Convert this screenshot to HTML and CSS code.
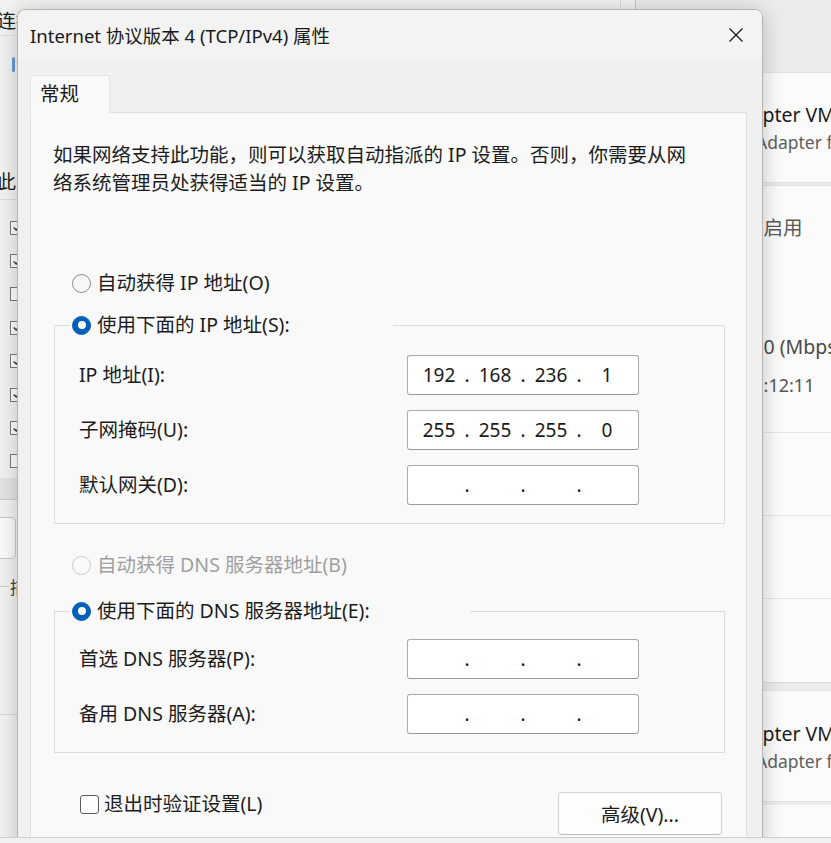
FILE: index.html
```html
<!DOCTYPE html>
<html lang="zh-CN">
<head>
<meta charset="utf-8">
<title>Internet 协议版本 4 (TCP/IPv4) 属性</title>
<link rel="stylesheet" href="styles.css">
</head>
<body>
<div class="desktop">
  <div class="win-left">
    <div class="wl-head">连接</div>
    <div class="wl-tick"></div>
    <div class="wl-label">此</div>
    <ul class="wl-list">
      <li><span class="cb"><svg viewBox="0 0 13 13" width="11" height="11"><polyline points="2,6.5 5,9.5 11,3" fill="none" stroke="#333" stroke-width="1.6"/></svg></span></li>
      <li><span class="cb"><svg viewBox="0 0 13 13" width="11" height="11"><polyline points="2,6.5 5,9.5 11,3" fill="none" stroke="#333" stroke-width="1.6"/></svg></span></li>
      <li><span class="cb"></span></li>
      <li><span class="cb"><svg viewBox="0 0 13 13" width="11" height="11"><polyline points="2,6.5 5,9.5 11,3" fill="none" stroke="#333" stroke-width="1.6"/></svg></span></li>
      <li><span class="cb"><svg viewBox="0 0 13 13" width="11" height="11"><polyline points="2,6.5 5,9.5 11,3" fill="none" stroke="#333" stroke-width="1.6"/></svg></span></li>
      <li><span class="cb"><svg viewBox="0 0 13 13" width="11" height="11"><polyline points="2,6.5 5,9.5 11,3" fill="none" stroke="#333" stroke-width="1.6"/></svg></span></li>
      <li><span class="cb"><svg viewBox="0 0 13 13" width="11" height="11"><polyline points="2,6.5 5,9.5 11,3" fill="none" stroke="#333" stroke-width="1.6"/></svg></span></li>
      <li><span class="cb"></span></li>
    </ul>
    <div class="wl-band"></div>
    <div class="wl-btn"></div>
    <div class="wl-grp"><span class="wl-grp-line"></span><span>描述</span></div>
    <div class="wl-line"></div>
  </div>

  <div class="win-right">
    <div class="wr-top"></div>
    <div class="wr-card">
      <div class="wr-title">Adapter VMnet8</div>
      <div class="wr-sub">Adapter for VMnet8</div>
    </div>
    <div class="wr-card wr-card2">
      <div class="wr-status">已启用</div>
      <div class="wr-speed">1000 (Mbps)</div>
      <div class="wr-time">00:12:11</div>
    </div>
    <div class="wr-row"></div>
    <div class="wr-row"></div>
    <div class="wr-row wr-row-last"></div>
    <div class="wr-card wr-card3">
      <div class="wr-title">Adapter VMnet1</div>
      <div class="wr-sub">Adapter for VMnet1</div>
    </div>
    <div class="wr-row wr-row-end"></div>
  </div>

  <div class="dialog">
    <div class="titlebar">
      <span class="title">Internet 协议版本 4 (TCP/IPv4) 属性</span>
      <span class="close"><svg viewBox="0 0 16 16" width="16" height="16"><path d="M1.5 1.5 L14.5 14.5 M14.5 1.5 L1.5 14.5" stroke="#1a1a1a" stroke-width="1.3" fill="none"/></svg></span>
    </div>
    <div class="dlg-body">
      <div class="tabs"><div class="tab">常规</div></div>
      <div class="panel">
        <p class="desc">如果网络支持此功能，则可以获取自动指派的 IP 设置。否则，你需要从网<br>络系统管理员处获得适当的 IP 设置。</p>

        <div class="radio-row r-ipauto"><span class="radio"></span><span>自动获得 IP 地址(O)</span></div>

        <fieldset class="group g-ip">
          <legend class="legend lg-ip"><span class="legend-in"><span class="radio on"></span><span>使用下面的 IP 地址(S):</span></span></legend>
          <div class="fields">
            <label>IP 地址(I):</label>
            <div class="ipbox"><span class="seg">192</span><span class="dot">.</span><span class="seg">168</span><span class="dot">.</span><span class="seg">236</span><span class="dot">.</span><span class="seg">1</span></div>
            <label>子网掩码(U):</label>
            <div class="ipbox"><span class="seg">255</span><span class="dot">.</span><span class="seg">255</span><span class="dot">.</span><span class="seg">255</span><span class="dot">.</span><span class="seg">0</span></div>
            <label>默认网关(D):</label>
            <div class="ipbox"><span class="seg"></span><span class="dot">.</span><span class="seg"></span><span class="dot">.</span><span class="seg"></span><span class="dot">.</span><span class="seg"></span></div>
          </div>
        </fieldset>

        <div class="radio-row r-dnsauto disabled"><span class="radio off-dis"></span><span>自动获得 DNS 服务器地址(B)</span></div>

        <fieldset class="group g-dns">
          <legend class="legend lg-dns"><span class="legend-in"><span class="radio on"></span><span>使用下面的 DNS 服务器地址(E):</span></span></legend>
          <div class="fields">
            <label>首选 DNS 服务器(P):</label>
            <div class="ipbox"><span class="seg"></span><span class="dot">.</span><span class="seg"></span><span class="dot">.</span><span class="seg"></span><span class="dot">.</span><span class="seg"></span></div>
            <label>备用 DNS 服务器(A):</label>
            <div class="ipbox"><span class="seg"></span><span class="dot">.</span><span class="seg"></span><span class="dot">.</span><span class="seg"></span><span class="dot">.</span><span class="seg"></span></div>
          </div>
        </fieldset>

        <div class="footer">
          <label class="check"><span class="box"></span><span>退出时验证设置(L)</span></label>
          <button class="btn">高级(V)...</button>
        </div>
      </div>
    </div>
  </div>

  <div class="screen-edge"></div>
</div>
</body>
</html>
```

FILE: styles.css
```css
* { box-sizing: border-box; }

body {
  margin: 0;
  width: 831px;
  height: 843px;
  overflow: hidden;
  background: #f3f3f3;
  font-family: "Noto Sans", "Noto Sans CJK SC", sans-serif;
  color: #1c1c1c;
}

.desktop {
  position: relative;
  width: 831px;
  height: 843px;
  overflow: hidden;
}

/* ---------- left background window ---------- */
.win-left {
  position: absolute;
  left: 0;
  top: 0;
  width: 621px;
  height: 837px;
  background: #f3f3f3;
  border-right: 1px solid #dadada;
  font-size: 19px;
  color: #1c1c1c;
}

.wl-head {
  height: 36px;
  padding-top: 10px;
  line-height: 22px;
  text-indent: -3px;
  border-bottom: 1px solid #e2e2e2;
}

.wl-tick {
  width: 3px;
  height: 15px;
  margin: 21px 0 0 12px;
  background: #6b9ad4;
  border-radius: 2px;
}

.wl-label {
  margin-top: 99px;
  line-height: 22px;
  padding-bottom: 6px;
  text-indent: -3px;
  border-bottom: 1px solid #dedede;
}

.wl-list {
  list-style: none;
  margin: 11px 0 0;
  padding: 0;
}

.wl-list li {
  height: 33.4px;
  display: flex;
  align-items: center;
}

.cb {
  width: 14px;
  height: 14px;
  margin-left: 10px;
  border: 1px solid #7a7a7a;
  background: #fff;
  display: flex;
  align-items: center;
  justify-content: center;
}

.wl-band {
  height: 22px;
  background: #e4e4e4;
  border-bottom: 1px solid #cfcfcf;
}

.wl-btn {
  margin: 17px 0 0 -10px;
  width: 26px;
  height: 42px;
  border: 1px solid #cacaca;
  border-radius: 5px;
  background: #fbfbfb;
}

.wl-grp {
  margin-top: 16px;
  height: 22px;
  display: flex;
  align-items: center;
  gap: 1px;
  font-size: 17px;
  color: #444;
}

.wl-grp-line {
  width: 9px;
  border-top: 1px solid #cccccc;
}

.wl-line {
  margin-top: 117px;
  border-top: 1px solid #d8d8d8;
}

/* ---------- right background window ---------- */
.win-right {
  position: absolute;
  left: 635px;
  top: 0;
  width: 196px;
  height: 837px;
  background: #ececec;
  border-left: 1px solid #c6c6c6;
  display: flex;
  flex-direction: column;
  font-size: 19.5px;
  color: #1b1b1b;
  white-space: nowrap;
}

.wr-top {
  height: 72px;
  flex: none;
}

.wr-card {
  flex: none;
  background: #fbfbfb;
  border-top: 1px solid #e3e3e3;
  border-bottom: 1px solid #e3e3e3;
  height: 111px;
  padding-top: 29px;
}

.wr-title {
  line-height: 26px;
  padding-left: 91px;
}

.wr-sub {
  line-height: 22px;
  padding-left: 120px;
  font-size: 17.5px;
  color: #5f5f5f;
  margin-top: 3px;
}

.wr-card2 {
  margin-top: 2px;
  height: 248px;
  padding-top: 30px;
  border-bottom: 1px solid #e6e6e6;
}

.wr-status {
  line-height: 24px;
  padding-left: 108px;
  color: #5a5a5a;
}

.wr-speed {
  margin-top: 95px;
  line-height: 24px;
  padding-left: 94px;
  color: #4a4a4a;
}

.wr-time {
  margin-top: 14px;
  line-height: 24px;
  padding-left: 107px;
  font-size: 18px;
  color: #555;
}

.wr-row {
  flex: none;
  height: 83px;
  background: #fbfbfb;
  border-bottom: 1px solid #e6e6e6;
}

.wr-row-last {
  height: 84px;
  border-bottom: 1px solid #dadada;
}

.wr-card3 {
  margin-top: 7px;
  height: 112px;
  padding-top: 30px;
}

.wr-row-end {
  margin-top: 3px;
  flex: 1;
  border-bottom: none;
}

/* ---------- dialog ---------- */
.dialog {
  position: absolute;
  left: 17px;
  top: 9px;
  width: 746px;
  height: 860px;
  background: #f0f0f0;
  border: 1px solid #b4b4b4;
  border-radius: 8px 8px 0 0;
  box-shadow: 0 2px 22px rgba(0, 0, 0, 0.22);
  display: flex;
  flex-direction: column;
  overflow: hidden;
}

.titlebar {
  flex: none;
  height: 50px;
  background: #f3f3f3;
  display: flex;
  align-items: center;
  justify-content: space-between;
  padding-left: 12px;
}

.title {
  font-size: 18.5px;
  color: #1a1a1a;
  white-space: nowrap;
}

.close {
  width: 52px;
  height: 50px;
  display: flex;
  align-items: center;
  justify-content: center;
}

.dlg-body {
  flex: 1;
  padding: 15px 15px 0 12px;
  display: flex;
  flex-direction: column;
  font-size: 19.5px;
}

.tabs {
  display: flex;
  flex: none;
}

.tab {
  position: relative;
  z-index: 1;
  width: 80px;
  height: 38px;
  margin-bottom: -1px;
  padding-left: 9px;
  line-height: 36px;
  background: #f9f9f9;
  border: 1px solid #e4e4e4;
  border-bottom: none;
  color: #1a1a1a;
}

.panel {
  flex: 1;
  background: #f9f9f9;
  border: 1px solid #e0e0e0;
  padding: 28px 21px 0 22px;
}

.desc {
  margin: 0;
  line-height: 28px;
  white-space: nowrap;
}

.radio-row {
  display: flex;
  align-items: center;
  gap: 6px;
  height: 24px;
  line-height: 24px;
  margin-left: 19px;
}

.r-ipauto { margin-top: 74px; }
.r-dnsauto { margin-top: 29px; }

.disabled { color: #a0a0a0; }

.radio {
  flex: none;
  width: 19px;
  height: 19px;
  border-radius: 50%;
  border: 1.5px solid #8a8a8a;
  background: #f7f7f7;
  display: flex;
  align-items: center;
  justify-content: center;
}

.radio.on {
  background: #005fb8;
  border-color: #005fb8;
}

.radio.on::after {
  content: "";
  width: 8px;
  height: 8px;
  border-radius: 50%;
  background: #fff;
}

.radio.off-dis {
  border-color: #cacaca;
  background: #fafafa;
}

.group {
  margin: 0 0 0 1px;
  width: 671px;
  min-width: 0;
  border: 1px solid #dcdcdc;
  padding: 18px 0 18px 0;
}

.g-ip { margin-top: 18px; }
.g-dns { margin-top: 22px; padding-top: 16px; }

.legend {
  margin-left: 15px;
  padding: 0 0 0 2px;
  height: 24px;
  line-height: 24px;
}

.lg-ip { width: 323px; }
.lg-dns { width: 400px; }

.legend-in {
  display: flex;
  align-items: center;
  gap: 6px;
  height: 24px;
}

.fields {
  display: grid;
  grid-template-columns: 328px 232px;
  row-gap: 15px;
  margin-left: 24px;
}

.fields label {
  align-self: center;
  line-height: 24px;
  white-space: nowrap;
}

.ipbox {
  height: 40px;
  border: 1px solid #aaaaaa;
  border-bottom-color: #9a9a9a;
  border-radius: 3px;
  background: #ffffff;
  display: flex;
  align-items: center;
  padding-left: 13px;
  font-size: 19px;
  color: #1a1a1a;
}

.seg {
  width: 36px;
  text-align: center;
}

.dot {
  width: 20px;
  text-align: center;
}

.footer {
  display: flex;
  justify-content: space-between;
  align-items: flex-start;
  margin-top: 39px;
  padding-left: 27px;
  padding-right: 3px;
}

.check {
  display: flex;
  align-items: center;
  gap: 5px;
  height: 24px;
  line-height: 24px;
}

.box {
  width: 19px;
  height: 19px;
  border: 1.5px solid #5c5c5c;
  border-radius: 3px;
  background: #fdfdfd;
}

.btn {
  width: 164px;
  height: 43px;
  border: 1px solid #d3d3d3;
  border-bottom-color: #bdbdbd;
  border-radius: 4px;
  background: #fdfdfd;
  font: inherit;
  color: #1c1c1c;
  padding: 0;
}

.screen-edge {
  position: absolute;
  left: 0;
  top: 837px;
  width: 831px;
  height: 6px;
  background: #f1f1f1;
  border-top: 1px solid #cfcfcf;
}
```
